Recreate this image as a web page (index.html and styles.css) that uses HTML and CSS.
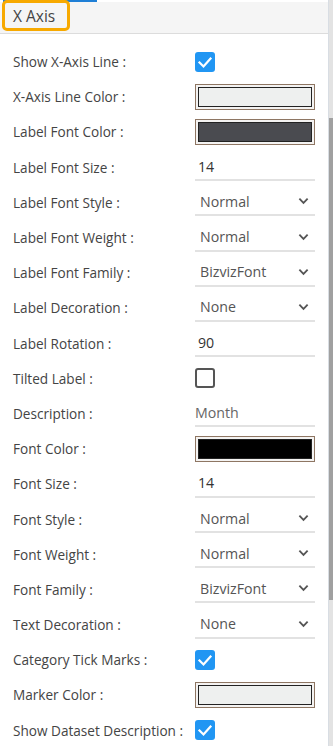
FILE: index.html
```html
<!DOCTYPE html>
<html>
<head>
  <link rel="stylesheet" href="styles.css">
</head>
<body>
  <div class="panel">
    <div class="main">
      <div class="head">
        <span class="head-title">X Axis</span>
      </div>
      <div class="rows">
        <div class="row">
          <label>Show X-Axis Line :</label>
          <span class="check on"><svg viewBox="0 0 20 20"><path d="M4.5 10.5l4 4 7-8"/></svg></span>
        </div>
        <div class="row">
          <label>X-Axis Line Color :</label>
          <span class="color"><span class="swatch light"></span></span>
        </div>
        <div class="row">
          <label>Label Font Color :</label>
          <span class="color"><span class="swatch dark"></span></span>
        </div>
        <div class="row">
          <label>Label Font Size :</label>
          <span class="field">14</span>
        </div>
        <div class="row">
          <label>Label Font Style :</label>
          <span class="select">Normal<svg viewBox="0 0 12 8"><path d="M1.5 1.5l4.5 4.5 4.5-4.5"/></svg></span>
        </div>
        <div class="row">
          <label>Label Font Weight :</label>
          <span class="select">Normal<svg viewBox="0 0 12 8"><path d="M1.5 1.5l4.5 4.5 4.5-4.5"/></svg></span>
        </div>
        <div class="row">
          <label>Label Font Family :</label>
          <span class="select">BizvizFont<svg viewBox="0 0 12 8"><path d="M1.5 1.5l4.5 4.5 4.5-4.5"/></svg></span>
        </div>
        <div class="row">
          <label>Label Decoration :</label>
          <span class="select">None<svg viewBox="0 0 12 8"><path d="M1.5 1.5l4.5 4.5 4.5-4.5"/></svg></span>
        </div>
        <div class="row">
          <label>Label Rotation :</label>
          <span class="field">90</span>
        </div>
        <div class="row">
          <label>Tilted Label :</label>
          <span class="check"></span>
        </div>
        <div class="row">
          <label>Description :</label>
          <span class="field muted">Month</span>
        </div>
        <div class="row">
          <label>Font Color :</label>
          <span class="color"><span class="swatch black"></span></span>
        </div>
        <div class="row">
          <label>Font Size :</label>
          <span class="field">14</span>
        </div>
        <div class="row">
          <label>Font Style :</label>
          <span class="select">Normal<svg viewBox="0 0 12 8"><path d="M1.5 1.5l4.5 4.5 4.5-4.5"/></svg></span>
        </div>
        <div class="row">
          <label>Font Weight :</label>
          <span class="select">Normal<svg viewBox="0 0 12 8"><path d="M1.5 1.5l4.5 4.5 4.5-4.5"/></svg></span>
        </div>
        <div class="row">
          <label>Font Family :</label>
          <span class="select">BizvizFont<svg viewBox="0 0 12 8"><path d="M1.5 1.5l4.5 4.5 4.5-4.5"/></svg></span>
        </div>
        <div class="row">
          <label>Text Decoration :</label>
          <span class="select">None<svg viewBox="0 0 12 8"><path d="M1.5 1.5l4.5 4.5 4.5-4.5"/></svg></span>
        </div>
        <div class="row">
          <label>Category Tick Marks :</label>
          <span class="check on"><svg viewBox="0 0 20 20"><path d="M4.5 10.5l4 4 7-8"/></svg></span>
        </div>
        <div class="row">
          <label>Marker Color :</label>
          <span class="color"><span class="swatch light"></span></span>
        </div>
        <div class="row">
          <label>Show Dataset Description :</label>
          <span class="check on"><svg viewBox="0 0 20 20"><path d="M4.5 10.5l4 4 7-8"/></svg></span>
        </div>
      </div>
    </div>
    <div class="scrollbar"><div class="thumb"></div></div>
  </div>
</body>
</html>
```

FILE: styles.css
```css
/* ============================================================
  PAGE
============================================================ */
html, body {
  margin: 0;
  height: 100%;
  overflow: hidden;
  background: #fff;
}
body {
  font-family: "Open Sans", "Noto Sans", sans-serif;
  color: #444;
}
.panel {
  display: flex;
  height: 746px;
}
.main {
  flex: 1;
  min-width: 0;
}

/* ============================================================
  HEADER
============================================================ */
.head {
  height: 33px;
  border-bottom: 1px solid #dcdcdc;
  background:
    linear-gradient(#1f7fd6, #1f7fd6) 3px 0 / 94px 2px no-repeat,
    linear-gradient(#fff, #fff) 0 0 / 100% 2px no-repeat,
    #f5f5f5;
  padding-left: 2px;
}
.head-title {
  display: inline-block;
  box-sizing: border-box;
  height: 31px;
  width: 68px;
  padding: 4px 0 0 8px;
  border: 3px solid #f7a900;
  border-radius: 5px;
  font-size: 15.5px;
  line-height: 18px;
  color: #444;
}

/* ============================================================
  ROWS
============================================================ */
.rows {
  padding: 10px 0 0 13px;
}
.row {
  display: grid;
  grid-template-columns: 182px 120px;
  align-items: center;
  height: 35.2px;
}
.row label {
  font-size: 13.6px;
  white-space: nowrap;
}

.check {
  box-sizing: border-box;
  width: 20px;
  height: 20px;
  border: 2px solid #555;
  border-radius: 3px;
}
.check.on {
  border: none;
  background: #2196f3;
}
.check svg {
  display: block;
  width: 20px;
  height: 20px;
  fill: none;
  stroke: #fff;
  stroke-width: 2.2;
  stroke-linecap: square;
}

.color {
  box-sizing: border-box;
  display: block;
  height: 26px;
  padding: 2px;
  border: 1px solid #8e7663;
  background: #f4f3f2;
}
.swatch {
  display: block;
  height: 100%;
  box-sizing: border-box;
  border: 1px solid #222;
}
.swatch.light { background: #eef0ef; }
.swatch.dark { background: #4a4b50; }
.swatch.black { background: #000; }

.field, .select {
  box-sizing: border-box;
  display: flex;
  align-items: center;
  height: 28px;
  padding: 0 0 0 3px;
  border-bottom: 2px solid #e2e2e2;
  font-size: 14.2px;
  color: #333;
}
.field.muted {
  padding-left: 0;
  color: #666;
}
.select {
  justify-content: space-between;
  padding-left: 5px;
  padding-right: 6px;
  color: #555;
}
.select svg {
  width: 11px;
  height: 8px;
  fill: none;
  stroke: #555;
  stroke-width: 2;
}

/* ============================================================
  SCROLLBAR
============================================================ */
.scrollbar {
  width: 4px;
  background: #e3e3e3;
  border-left: 1px solid #d8dde3;
}
.thumb {
  margin-top: 118px;
  height: 482px;
  background: #a0a0a0;
}
```
